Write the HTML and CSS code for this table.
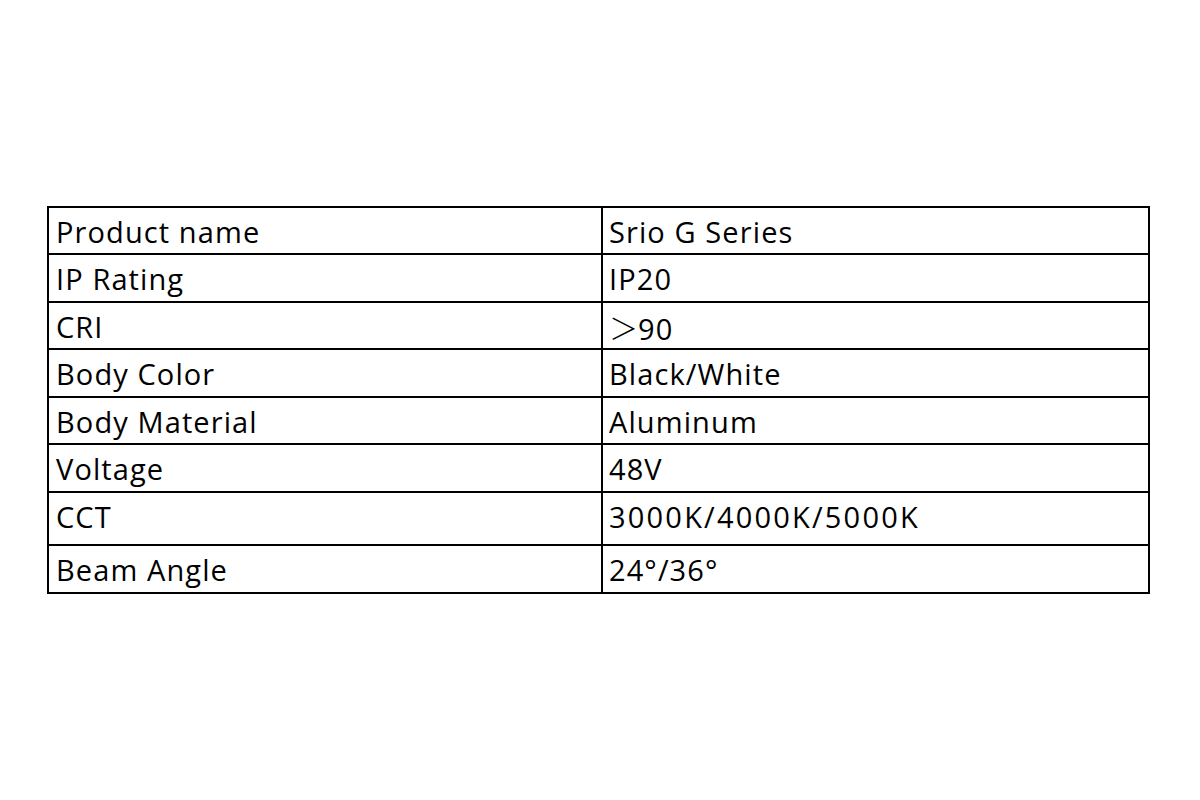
FILE: index.html
```html
<!DOCTYPE html>
<html lang="en">
<head>
<meta charset="utf-8">
<title>Srio G Series</title>
<link rel="stylesheet" href="styles.css">
</head>
<body>
<div class="sheet">
  <div class="row r1"><div class="key">Product name</div><div class="val">Srio G Series</div></div>
  <div class="row"><div class="key">IP Rating</div><div class="val">IP20</div></div>
  <div class="row"><div class="key">CRI</div><div class="val"><span class="gt">＞</span>90</div></div>
  <div class="row"><div class="key">Body Color</div><div class="val">Black/White</div></div>
  <div class="row"><div class="key">Body Material</div><div class="val">Aluminum</div></div>
  <div class="row"><div class="key">Voltage</div><div class="val">48V</div></div>
  <div class="row tall"><div class="key">CCT</div><div class="val wide">3000K/4000K/5000K</div></div>
  <div class="row"><div class="key">Beam Angle</div><div class="val">24°/36°</div></div>
</div>
</body>
</html>
```

FILE: styles.css
```css
html, body {
  margin: 0;
  padding: 0;
  background: #ffffff;
}

body {
  font-family: "Open Sans", "Noto Sans", sans-serif;
  color: #000000;
}

.sheet {
  box-sizing: border-box;
  margin: 206px 0 0 47px;
  width: 1103px;
  border: 2px solid #000000;
}

.row {
  box-sizing: border-box;
  display: grid;
  grid-template-columns: 552px 1fr;
  height: 48px;
  border-top: 2px solid #000000;
}

.row:nth-child(odd) {
  height: 47px;
}

.row.r1 {
  height: 45px;
  border-top: none;
}

.row.tall {
  height: 53px;
}

.key,
.val {
  font-size: 29px;
  font-weight: 500;
  line-height: 40px;
  letter-spacing: 1.1px;
  padding: 4px 0 0 7px;
  white-space: nowrap;
}

.val {
  border-left: 2px solid #000000;
  padding-left: 6px;
}

.val.wide {
  letter-spacing: 2.2px;
}

.gt {
  font-family: "Noto Sans CJK SC", sans-serif;
  font-weight: 300;
  letter-spacing: 0;
}
```
